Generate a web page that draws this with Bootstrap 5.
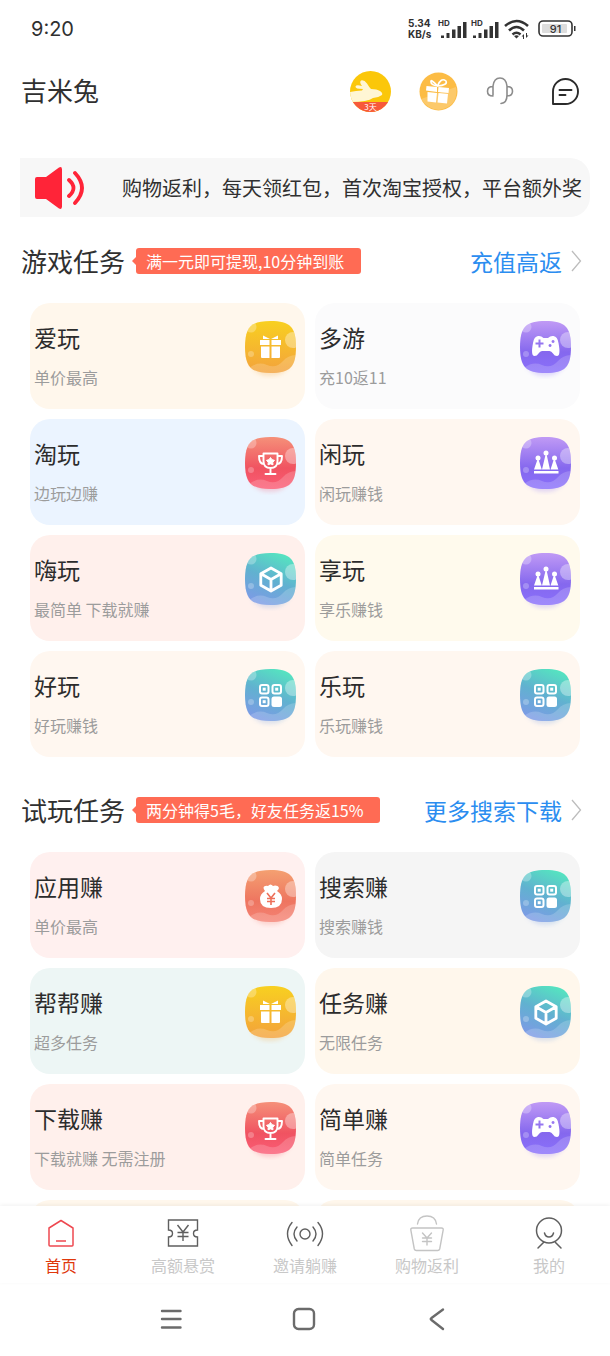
<!DOCTYPE html>
<html lang="zh-CN">
<head>
<meta charset="utf-8">
<meta name="viewport" content="width=device-width, initial-scale=1">
<title>吉米兔</title>
<link href="https://cdn.jsdelivr.net/npm/bootstrap@5.3.0/dist/css/bootstrap.min.css" rel="stylesheet">
<style>
  body { font-family: "Noto Sans CJK SC", "Noto Sans", sans-serif; color: #303030; background: #fff; }
  a { text-decoration: none; color: inherit; }
  svg { display: block; flex: none; }
  .status-bar { height: 57px; padding: 0 34px 0 31px; font-family: Inter, "Noto Sans", sans-serif; }
  .clock { font-size: 20px; font-weight: 400; line-height: 24px; }
  .net-speed { font-size: 10px; font-weight: 700; line-height: 11px; width: 26px; }
  .app-header { height: 68px; padding: 0 30px 0 21px; }
  .header-actions { gap: 28px; }
  .chat-btn { margin-left: 9px; }
  .app-name { font-size: 26px; line-height: 34px; padding-bottom: 2px; font-weight: 400; }
  .icon-btn { border: 0; padding: 0; background: none; }
  .app-main { min-height: 0; overflow-y: auto; scrollbar-width: none; }
  .app-main::-webkit-scrollbar { display: none; }
  .notice { margin: 33px 20px 0; height: 59px; padding-left: 14px; background: #f7f7f7; border-radius: 0 20px 20px 0; overflow: hidden; font-size: 20px; gap: 34px; }
  .section-head { height: 86px; padding: 2px 28px 0 21px; }
  .trial-head { margin-top: 9px; }
  .section-head h2 { font-size: 26px; line-height: 36px; font-weight: 400; }
  .tip { margin-left: 11px; padding: 0 17px 0 10px; height: 26px; line-height: 26px; font-size: 16px; color: #fff; background: #ff6b54; border-radius: 3px; position: relative; }
  .tip::before { content: ""; position: absolute; left: -4px; top: 9px; border: solid transparent; border-width: 4px 4px 4px 0; border-right-color: #ff6b54; }
  .more-link { font-size: 23px; line-height: 32px; color: #2b8df0; gap: 8px; }
  .task-grid { display: grid; grid-template-columns: 275fr 265fr; gap: 10px; padding: 0 30px; }
  .task-card { height: 106px; border-radius: 20px; padding: 18px 9px 0 4px; }
  .task-card h3 { font-size: 23px; line-height: 32px; font-weight: 400; margin: 0 0 9px; color: #2c2c2c; }
  .task-card p { font-size: 16px; line-height: 30px; margin: 0; color: #9c9c9c; }
  .task-card svg { width: 51px; height: 58px; }
  .peach { background: #fff7ec; } .pale { background: #fbfbfc; } .sky { background: #ebf4ff; }
  .shell { background: #fff7f0; } .rose { background: #fff0ec; } .cream { background: #fffaed; }
  .blush { background: #fff0ef; } .mist { background: #f5f5f5; } .mint { background: #edf6f5; }
  .tab-bar { position: relative; background: #fff; box-shadow: 0 -1px 4px rgba(0,0,0,.06); height: 77px; padding-top: 7px; font-size: 16px; line-height: 24px; color: #c8c8c8; }
  .tab-bar a { flex: 1 1 0; }
  .tab-bar .current { color: #e0380c; }
  .system-nav { height: 73px; gap: 109px; padding: 0 3px 1px 0; background: #fff; }
</style>
</head>
<body>
<svg width="0" height="0" class="position-absolute" aria-hidden="true">
  <defs>
    <linearGradient id="gold" x1="0" y1="0" x2="0" y2="1"><stop offset="0" stop-color="#f8d020"/><stop offset="1" stop-color="#f3a23c"/></linearGradient>
    <linearGradient id="violet" x1="0" y1="0" x2="0" y2="1"><stop offset="0" stop-color="#c09af5"/><stop offset=".6" stop-color="#8568ee"/><stop offset="1" stop-color="#8a70fb"/></linearGradient>
    <linearGradient id="red" x1="0" y1="0" x2="0" y2="1"><stop offset="0" stop-color="#f59079"/><stop offset=".6" stop-color="#f05361"/><stop offset="1" stop-color="#fb5c76"/></linearGradient>
    <linearGradient id="teal" x1=".7" y1="0" x2=".3" y2="1"><stop offset="0" stop-color="#55e4c0"/><stop offset=".5" stop-color="#61b1d0"/><stop offset="1" stop-color="#7d9ae6"/></linearGradient>
    <linearGradient id="coral" x1="0" y1="0" x2="0" y2="1"><stop offset="0" stop-color="#f4a071"/><stop offset=".6" stop-color="#ee7560"/><stop offset="1" stop-color="#f58375"/></linearGradient>
    <filter id="soft" x="-20%" y="-20%" width="140%" height="150%"><feGaussianBlur stdDeviation="2"/></filter>
    <clipPath id="blobClip"><path d="M25.500 0C45 0 51 6 51 26S45 52 25.500 52 0 46 0 26 6 0 25.500 0Z"/></clipPath>
    <g id="tile">
      <path d="M6 12H45V45Q38 55 25 55Q12 55 6 45Z" opacity=".25" filter="url(#soft)"/>
      <g clip-path="url(#blobClip)">
        <rect width="51" height="52"/>
        <g fill="#fff"><circle cx="48" cy="19" r="8" opacity=".35"/><circle cx="6" cy="6" r="5.500" opacity=".28"/><circle cx="6" cy="33" r="3" opacity=".25"/>
        <path d="M4 47Q13 40 22 44Q31 48 38 40Q43 34 52 34V53H4Z" opacity=".18"/></g>
      </g>
    </g>
    <symbol id="i-gift" viewBox="0 0 51 58"><use href="#tile" fill="url(#gold)"/><path fill="#fff" d="M15 19h9.500v5H15zM26.500 19H36v5h-9.500zM16 25.500h8.500V37H17q-1 0-1-1zM26.500 25.500H35V36q0 1-1 1h-7.500zM18 14.500l7 3.500h-7zM33 14.500l-7 3.500h7z"/></symbol>
    <symbol id="i-pad" viewBox="0 0 51 58"><use href="#tile" fill="url(#violet)"/><path fill="#fff" fill-rule="evenodd" d="M18 15Q21 14.500 23.500 17H28Q30.500 14.500 33.500 15Q37.500 15.500 38.500 22Q41 35 37 35Q34.500 35 33 32.500Q31.500 30 29.500 30H22Q20 30 18.500 32.500Q17 35 14.500 35Q10.500 35 13 22Q14 15.500 18 15ZM18.500 18.500v3h-3v2h3v3h2v-3h3v-2h-3v-3ZM33 19a1.500 1.500 0 1 0 .1 0ZM30 23a1.500 1.500 0 1 0 .1 0Z"/></symbol>
    <symbol id="i-cup" viewBox="0 0 51 58"><use href="#tile" fill="url(#red)"/><path fill="none" stroke="#fff" stroke-width="1.900" stroke-linecap="round" stroke-linejoin="round" d="M18.500 16.500h14V24q0 7-7 7t-7-7zM18 19h-4q0 8 5 8M33 19h4q0 8-5 8M25.500 31v5M20.500 37h10"/><path fill="#fff" stroke="#fff" stroke-linejoin="round" d="m25.500 20.500 1.500 2.200 2.500.6-1.700 2 .2 2.500-2.500-.9-2.500.9.200-2.500-1.700-2 2.500-.6z"/></symbol>
    <symbol id="i-crown" viewBox="0 0 51 58"><use href="#tile" fill="url(#violet)"/><path fill="#fff" d="M14 34h24.500v2.500H14zM14 32.500l3.500-10h1l3.300 10zM22 32.500l3.600-15h1l3.400 15zM30.500 32.500l3.300-10h1l3.500 10z"/><g fill="#fff"><circle cx="18" cy="21" r="2.500"/><circle cx="26" cy="16" r="2.500"/><circle cx="34.500" cy="21" r="2.500"/></g></symbol>
    <symbol id="i-cube" viewBox="0 0 51 58"><use href="#tile" fill="url(#teal)"/><path fill="none" stroke="#fff" stroke-width="2.800" stroke-linejoin="round" d="M26 15l10.200 5.700v11.600L26 38l-10.200-5.700V20.700zM16 20.800 26 26.500l10-5.700M26 26.500V38"/></symbol>
    <symbol id="i-apps" viewBox="0 0 51 58"><use href="#tile" fill="url(#teal)"/><g fill="none" stroke="#fff" stroke-width="2"><rect x="15" y="16" width="8.500" height="8.500" rx="2"/><rect x="27.500" y="16" width="8.500" height="8.500" rx="2"/><rect x="15" y="28.500" width="8.500" height="8.500" rx="2"/></g><g fill="#fff"><rect x="17.700" y="18.700" width="3" height="3"/><rect x="30.200" y="18.700" width="3" height="3"/><rect x="17.700" y="31.200" width="3" height="3"/><rect x="26.500" y="27.500" width="10.500" height="10.500" rx="2.500"/></g></symbol>
    <symbol id="i-bag" viewBox="0 0 51 58"><use href="#tile" fill="url(#coral)"/><path fill="#fff" d="M20 21q-3-4 0-5 2-.5 3 0 2.500-3 5 0 2-1 4.500 0 3 2-.5 5 5 3 5 8 0 9-11 9T15 29q0-5 5-8z"/><path fill="none" stroke="#ed6f59" stroke-width="1.600" d="m22 23 4 5 4-5M26 28v7M22 28.500h8M22 31.500h8"/></symbol>
    <symbol id="i-bars" viewBox="0 0 27 18"><path fill="#333" d="M1 15.500h3v2.500H1zM6.500 13h3v5h-3zM12 9.500h3.500V18H12zM17.500 6H21v12h-3.500zM23 2h3.500v16H23z"/></symbol>
    <symbol id="i-next" viewBox="0 0 12 22"><path fill="none" stroke="#bdbdbd" stroke-width="1.300" d="m2 1 8.500 10L2 21"/></symbol>
  </defs>
</svg>

<div class="vh-100 d-flex flex-column overflow-hidden">
  <div class="status-bar d-flex align-items-center justify-content-between flex-shrink-0">
    <span class="clock">9:20</span>
    <div class="d-flex align-items-center">
      <div class="net-speed me-1"><div>5.34</div><div>KB/s</div></div>
      <svg width="62" height="26" viewBox="0 0 62 26" role="img" aria-label="信号"><use href="#i-bars" x="2" y="4" width="27" height="18"/><use href="#i-bars" x="34" y="4" width="27" height="18"/><g font-family="Inter" font-size="8" font-weight="700" fill="#333"><text x="0" y="10">HD</text><text x="33" y="10">HD</text></g></svg>
      <svg class="ms-1" width="26" height="20" viewBox="0 0 26 20" role="img" aria-label="无线网络"><g fill="none" stroke="#333" stroke-width="2.600"><path d="M1 7Q12.500-3 24 7M5 11.500Q12.500 4.500 20 11.500M8.500 15.500Q12.500 12 16.500 15.500"/></g><path fill="#333" d="m10 17 2.500 2.500L15 17q-2.500-1.500-5 0zM17.500 17.500l2.500-2.500v5h-1v-2.500zM24.500 16.500 22 19v-5h1v2.500z"/></svg>
      <svg class="ms-2" width="38" height="17" viewBox="0 0 38 17" role="img" aria-label="电量 91"><rect x="1" y="1" width="33" height="15" rx="4" fill="none" stroke="#333" stroke-width="1.600"/><rect x="4" y="4" width="25" height="9" rx="1" fill="#ddd"/><path fill="#333" d="M36 6h1.500v5H36z"/><text x="17.500" y="12.500" font-family="Inter" font-size="11" font-weight="500" text-anchor="middle" fill="#333">91</text></svg>
    </div>
  </div>

  <header class="app-header d-flex align-items-center justify-content-between flex-shrink-0">
    <h1 class="app-name m-0">吉米兔</h1>
    <div class="header-actions d-flex align-items-center">
      <button class="icon-btn" type="button" aria-label="签到"><svg width="41" height="41" viewBox="0 0 41 41"><defs><clipPath id="disc"><circle cx="20.500" cy="20.500" r="20.500"/></clipPath></defs><g clip-path="url(#disc)"><rect width="41" height="41" fill="#fbc70a"/><path fill="#fff6d4" d="M0 21Q6 19.500 12 19.500L13 18Q5 18 5.500 15.500Q6 13.500 12 15Q9 11 11 9.500Q14 8.500 17 12.500Q19 16 21 18Q27 18 30 20Q33 22 32 24Q28 27 23 27Q18 31 0 31Z"/><rect y="31" width="41" height="10" fill="#f7593a"/></g><text x="20.500" y="39" font-size="8" text-anchor="middle" fill="#fff">3天</text></svg></button>
      <button class="icon-btn" type="button" aria-label="礼物"><svg width="39" height="39" viewBox="0 0 39 39"><circle cx="19.500" cy="19.500" r="19" fill="#fcbc45"/><path fill="#fff" opacity=".2" d="M2 27 37 15Q40 34 20 38Q8 37 2 27z"/><path fill="#fff" d="m7.500 14 10.500 1v5L7 18.500zM19.500 15l10.500 1-.5 5-10.500-1zM8.500 20l9.500 1-1 9.500-8.500-1zM19.500 21l9.500 1-1 9.500-9.500-1z"/><path fill="none" stroke="#fff" stroke-width="1.600" d="M18.500 14Q11 6 12 10q0 3 6.500 4Q22 5 27 9q2 4-8.500 5"/></svg></button>
      <button class="icon-btn" type="button" aria-label="客服"><svg width="28" height="28" viewBox="0 0 28 28" fill="none" stroke="#8c8c8c" stroke-width="1.600" stroke-linecap="round"><path d="M7 18V9q1-8 7-8t7 8v9q0 8-6 8.500M7 9.500q-5.500 0-5.500 4.700T7 19M21 9.500q5.500 0 5.500 4.700T21 19"/></svg></button>
      <button class="icon-btn chat-btn" type="button" aria-label="消息"><svg width="29" height="29" viewBox="0 0 29 29" fill="none" stroke="#2b2b2b" stroke-width="1.900" stroke-linecap="round" stroke-linejoin="round"><path d="M2 27V14.500A12.500 12.500 0 1 1 14.500 27zM8.500 13h12M8.500 18h6"/></svg></button>
    </div>
  </header>

  <main class="app-main flex-grow-1">
    <div class="notice d-flex align-items-center text-nowrap">
      <svg width="54" height="44" viewBox="0 0 54 44"><path fill="#ff2438" d="M3 11h9L25 1.500q3-1.500 3 2v37q0 3.500-3 2L12 33H3q-2 0-2-2V13q0-2 2-2z"/><path fill="none" stroke="#ff2438" stroke-width="3.800" stroke-linecap="round" d="M35 14q9 8 0 16M41 7q14 15 0 30"/></svg>
      <span>购物返利，每天领红包，首次淘宝授权，平台额外奖</span>
    </div>

    <section>
      <div class="section-head d-flex align-items-center">
        <h2 class="m-0">游戏任务</h2><span class="tip">满一元即可提现,10分钟到账</span>
        <a href="#" class="more-link d-flex align-items-center ms-auto">充值高返<svg width="12" height="22"><use href="#i-next"/></svg></a>
      </div>
      <div class="task-grid">
        <a href="#" class="task-card peach d-flex justify-content-between"><div><h3>爱玩</h3><p>单价最高</p></div><svg><use href="#i-gift"/></svg></a>
        <a href="#" class="task-card pale d-flex justify-content-between"><div><h3>多游</h3><p>充10返11</p></div><svg><use href="#i-pad"/></svg></a>
        <a href="#" class="task-card sky d-flex justify-content-between"><div><h3>淘玩</h3><p>边玩边赚</p></div><svg><use href="#i-cup"/></svg></a>
        <a href="#" class="task-card shell d-flex justify-content-between"><div><h3>闲玩</h3><p>闲玩赚钱</p></div><svg><use href="#i-crown"/></svg></a>
        <a href="#" class="task-card rose d-flex justify-content-between"><div><h3>嗨玩</h3><p>最简单 下载就赚</p></div><svg><use href="#i-cube"/></svg></a>
        <a href="#" class="task-card cream d-flex justify-content-between"><div><h3>享玩</h3><p>享乐赚钱</p></div><svg><use href="#i-crown"/></svg></a>
        <a href="#" class="task-card shell d-flex justify-content-between"><div><h3>好玩</h3><p>好玩赚钱</p></div><svg><use href="#i-apps"/></svg></a>
        <a href="#" class="task-card shell d-flex justify-content-between"><div><h3>乐玩</h3><p>乐玩赚钱</p></div><svg><use href="#i-apps"/></svg></a>
      </div>
    </section>

    <section>
      <div class="section-head trial-head d-flex align-items-center">
        <h2 class="m-0">试玩任务</h2><span class="tip">两分钟得5毛，好友任务返15%</span>
        <a href="#" class="more-link d-flex align-items-center ms-auto">更多搜索下载<svg width="12" height="22"><use href="#i-next"/></svg></a>
      </div>
      <div class="task-grid">
        <a href="#" class="task-card blush d-flex justify-content-between"><div><h3>应用赚</h3><p>单价最高</p></div><svg><use href="#i-bag"/></svg></a>
        <a href="#" class="task-card mist d-flex justify-content-between"><div><h3>搜索赚</h3><p>搜索赚钱</p></div><svg><use href="#i-apps"/></svg></a>
        <a href="#" class="task-card mint d-flex justify-content-between"><div><h3>帮帮赚</h3><p>超多任务</p></div><svg><use href="#i-gift"/></svg></a>
        <a href="#" class="task-card peach d-flex justify-content-between"><div><h3>任务赚</h3><p>无限任务</p></div><svg><use href="#i-cube"/></svg></a>
        <a href="#" class="task-card rose d-flex justify-content-between"><div><h3>下载赚</h3><p>下载就赚 无需注册</p></div><svg><use href="#i-cup"/></svg></a>
        <a href="#" class="task-card shell d-flex justify-content-between"><div><h3>简单赚</h3><p>简单任务</p></div><svg><use href="#i-pad"/></svg></a>
        <div class="task-card peach"></div>
        <div class="task-card peach"></div>
      </div>
    </section>
  </main>

  <nav class="tab-bar d-flex flex-shrink-0" aria-label="主导航">
    <a href="#" class="current d-flex flex-column align-items-center"><svg width="40" height="40" viewBox="0 0 40 40" fill="none" stroke="#ee4850" stroke-width="1.500" stroke-linejoin="round"><path d="M8 15 20 7.500 32 15v17q0 1-1 1H9q-1 0-1-1zM15 28h10"/></svg>首页</a>
    <a href="#" class="d-flex flex-column align-items-center"><svg width="40" height="40" viewBox="0 0 40 40" fill="none" stroke="#5f5f5f" stroke-width="1.400"><path d="M5.500 7h29v10q-4 0-4 3.500t4 3.500v9h-29v-9q4 0 4-3.500T5.500 17zM14.500 12l5.500 7 5.500-7M20 19v9M14.500 19.500h11M14.500 23.500h11"/></svg>高额悬赏</a>
    <a href="#" class="d-flex flex-column align-items-center"><svg width="40" height="40" viewBox="0 0 40 40" fill="none" stroke="#5f5f5f" stroke-width="1.400" stroke-linecap="round"><circle cx="20" cy="21" r="5"/><path d="M12 14q-6 7 0 14M7 9.500q-9 11 0 23M28 14q6 7 0 14M33 9.500q9 11 0 23"/></svg>邀请躺赚</a>
    <a href="#" class="d-flex flex-column align-items-center"><svg width="40" height="40" viewBox="0 0 40 40" fill="none" stroke="#c4c4c4" stroke-width="1.400" stroke-linecap="round"><path d="M5.500 15h29q2 0 1.700 2l-3.500 19q-.5 1.500-2 1.500H9.300q-1.500 0-2-1.500L3.800 17Q3.500 15 5.500 15zM10.500 11q1-8 9.500-8t9.500 8M15.500 20l4.500 5 4.500-5M20 25v7M15.500 25h9M15.500 28.500h9"/></svg>购物返利</a>
    <a href="#" class="d-flex flex-column align-items-center"><svg width="40" height="40" viewBox="0 0 40 40" fill="none" stroke="#5f5f5f" stroke-width="1.500" stroke-linecap="round"><circle cx="20" cy="17.500" r="12.500"/><path d="M15.500 20q1 4 4.500 4t4.500-4M14.500 29.500 9 35M26.500 29.500 32 35"/></svg>我的</a>
  </nav>

  <div class="system-nav d-flex align-items-center justify-content-center flex-shrink-0">
    <button class="icon-btn" type="button" aria-label="最近任务"><svg width="24" height="24" viewBox="0 0 24 24" stroke="#6b6b6b" stroke-width="2.400" stroke-linecap="round"><path d="M3 4h18.500M3 12h18.500M3 20.500h18.500"/></svg></button>
    <button class="icon-btn" type="button" aria-label="主屏幕"><svg width="24" height="24" viewBox="0 0 24 24"><rect x="2" y="2" width="20" height="20" rx="4.500" fill="none" stroke="#6b6b6b" stroke-width="2.400"/></svg></button>
    <button class="icon-btn" type="button" aria-label="返回"><svg width="24" height="24" viewBox="0 0 24 24" fill="none" stroke="#6b6b6b" stroke-width="2.400" stroke-linecap="round" stroke-linejoin="round"><path d="M18 2.500 6.500 11q-1.500 1 0 2L18 22"/></svg></button>
  </div>
</div>
<script src="https://cdn.jsdelivr.net/npm/bootstrap@5.3.0/dist/js/bootstrap.bundle.min.js"></script>
</body>
</html>
